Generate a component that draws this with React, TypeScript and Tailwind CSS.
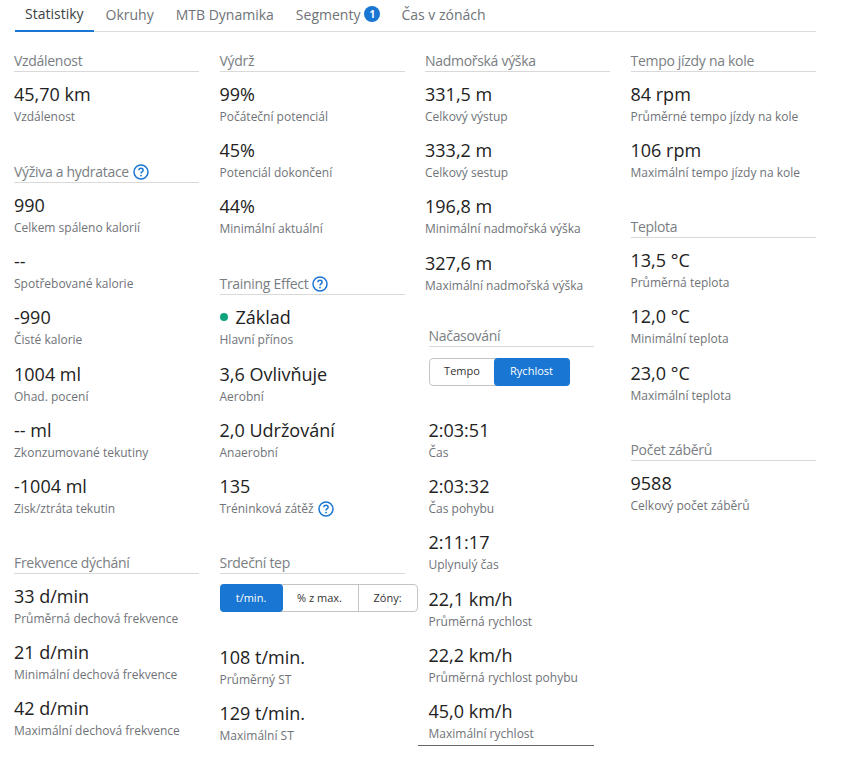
import React from "react";

const Help = ({ className = "" }: { className?: string }) => (
  <svg viewBox="0 0 16 16" className={`w-4 h-4 shrink-0 ${className}`} fill="none">
    <circle cx="8" cy="8" r="7" stroke="#1976d2" strokeWidth="1.5" />
    <path d="M5.9 6.3c0-1.2.9-2 2.1-2s2.1.8 2.1 1.9c0 1.7-2.1 1.7-2.1 3.2" stroke="#1976d2" strokeWidth="1.5" fill="none" />
    <circle cx="8" cy="11.6" r="0.95" fill="#1976d2" />
  </svg>
);

const Title = ({ children, className = "" }: { children: React.ReactNode; className?: string }) => (
  <div className={`flex items-center gap-[4px] h-[21px] border-b border-[#d9d9d9] text-[14px] tracking-[-0.3px] leading-[20px] text-[#7a7e83] ${className}`}>
    {children}
  </div>
);

const Stat = ({ value, label, icon, dot }: { value: string; label: string; icon?: boolean; dot?: boolean }) => (
  <div className="mb-[11.2px]">
    <div className="flex items-center gap-[8px] h-[28px] text-[18px] leading-[28px] text-[#222222]">
      {dot && <span className="w-[8px] h-[8px] rounded-full bg-[#10a37f] ml-[0px]" />}
      {value}
    </div>
    <div className="flex items-center gap-[4px] h-[17px] pt-[1px] text-[12px] leading-[16px] text-[#6f7378] whitespace-nowrap">
      {label}
      {icon && <Help />}
    </div>
  </div>
);

const Section = ({ title, help, stats, className = "" }: { title: string; help?: boolean; stats: [string, string][]; className?: string }) => (
  <section className={className}>
    <Title>
      {title}
      {help && <Help />}
    </Title>
    <div className="pt-[8px]">
      {stats.map(([v, l]) => (
        <Stat key={l} value={v} label={l} />
      ))}
    </div>
  </section>
);

const Toggle = ({ items, active, className, widths }: { items: string[]; active: number; className: string; widths: string[] }) => (
  <div className={`flex h-[28px] rounded-[4px] border border-[#c4c4c4] text-[11px] text-[#333333] ${className}`}>
    {items.map((it, i) => (
      <div
        key={it}
        className={`flex items-center justify-center ${widths[i]} ${i === active ? "bg-[#1976d2] text-white -m-[1px] h-[28px] rounded-[4px] relative" : ""} ${i > 0 && i !== active && i - 1 !== active ? "border-l border-[#c4c4c4]" : ""}`}
      >
        {it}
      </div>
    ))}
  </div>
);

const tabs = ["Okruhy", "MTB Dynamika"];

export default function App() {
  return (
    <div className="w-[842px] h-[771px] bg-white overflow-hidden font-['Open_Sans',sans-serif]">
      <div className="ml-[15px] w-[801px] h-[32px] border-b border-[#dcdcdc] flex gap-[2px] text-[14px] text-[#6f7378]">
        <div className="h-[32px] px-[10px] flex items-center pb-[3px] border-b-2 border-[#1976d2] text-[#3b3f44]">Statistiky</div>
        {tabs.map((t) => (
          <div key={t} className="h-[31px] px-[10px] flex items-center pb-[3px]">{t}</div>
        ))}
        <div className="h-[31px] pl-[10px] pr-[9px] flex items-center gap-[4px] pb-[3px]">
          Segmenty
          <span className="w-[16px] h-[16px] rounded-full bg-[#1976d2] text-white text-[10px] font-bold flex items-center justify-center">1</span>
        </div>
        <div className="h-[31px] px-[10px] flex items-center pb-[3px]">Čas v zónách</div>
      </div>

      <div className="flex gap-[20.5px] pl-[14px] pt-[19px]">
        {/* Column 1 */}
        <div className="w-[185px] shrink-0">
          <Section title="Vzdálenost" className="mb-[37px]" stats={[["45,70 km", "Vzdálenost"]]} />
          <Section
            title="Výživa a hydratace"
            help
            className="mb-[36px]"
            stats={[
              ["990", "Celkem spáleno kalorií"],
              ["--", "Spotřebované kalorie"],
              ["-990", "Čisté kalorie"],
              ["1004 ml", "Ohad. pocení"],
              ["-- ml", "Zkonzumované tekutiny"],
              ["-1004 ml", "Zisk/ztráta tekutin"],
            ]}
          />
          <Section
            title="Frekvence dýchání"
            stats={[
              ["33 d/min", "Průměrná dechová frekvence"],
              ["21 d/min", "Minimální dechová frekvence"],
              ["42 d/min", "Maximální dechová frekvence"],
            ]}
          />
        </div>

        {/* Column 2 */}
        <div className="w-[185px] shrink-0">
          <Section
            title="Výdrž"
            className="mb-[37px]"
            stats={[
              ["99%", "Počáteční potenciál"],
              ["45%", "Potenciál dokončení"],
              ["44%", "Minimální aktuální"],
            ]}
          />
          <section className="mb-[36px]">
            <Title>
              Training Effect
              <Help />
            </Title>
            <div className="pt-[8px]">
              <Stat dot value="Základ" label="Hlavní přínos" />
              <Stat value="3,6 Ovlivňuje" label="Aerobní" />
              <Stat value="2,0 Udržování" label="Anaerobní" />
              <Stat value="135" label="Tréninková zátěž" icon />
            </div>
          </section>
          <section>
            <Title>Srdeční tep</Title>
            <Toggle
              items={["t/min.", "% z max.", "Zóny:"]}
              active={0}
              className="w-[198px] mt-[10px] mb-[31px]"
              widths={["w-[63px]", "w-[76px]", "w-[59px]"]}
            />
            <Stat value="108 t/min." label="Průměrný ST" />
            <Stat value="129 t/min." label="Maximální ST" />
          </section>
        </div>

        {/* Column 3 */}
        <div className="w-[185px] shrink-0">
          <Section
            title="Nadmořská výška"
            className="mb-[32px]"
            stats={[
              ["331,5 m", "Celkový výstup"],
              ["333,2 m", "Celkový sestup"],
              ["196,8 m", "Minimální nadmořská výška"],
              ["327,6 m", "Maximální nadmořská výška"],
            ]}
          />
          <section className="-ml-[7.5px] w-[176px] h-[420px] border-b border-[#666666] pl-[11px]">
            <Title>Načasování</Title>
            <Toggle
              items={["Tempo", "Rychlost"]}
              active={1}
              className="w-[141px] mt-[11px] mb-[30.4px]"
              widths={["w-[65px]", "w-[76px]"]}
            />
            <Stat value="2:03:51" label="Čas" />
            <Stat value="2:03:32" label="Čas pohybu" />
            <Stat value="2:11:17" label="Uplynulý čas" />
            <Stat value="22,1 km/h" label="Průměrná rychlost" />
            <Stat value="22,2 km/h" label="Průměrná rychlost pohybu" />
            <Stat value="45,0 km/h" label="Maximální rychlost" />
          </section>
        </div>

        {/* Column 4 */}
        <div className="w-[185px] shrink-0">
          <Section
            title="Tempo jízdy na kole"
            className="mb-[36px]"
            stats={[
              ["84 rpm", "Průměrné tempo jízdy na kole"],
              ["106 rpm", "Maximální tempo jízdy na kole"],
            ]}
          />
          <Section
            title="Teplota"
            className="mb-[36px]"
            stats={[
              ["13,5 °C", "Průměrná teplota"],
              ["12,0 °C", "Minimální teplota"],
              ["23,0 °C", "Maximální teplota"],
            ]}
          />
          <Section title="Počet záběrů" stats={[["9588", "Celkový počet záběrů"]]} />
        </div>
      </div>
    </div>
  );
}
